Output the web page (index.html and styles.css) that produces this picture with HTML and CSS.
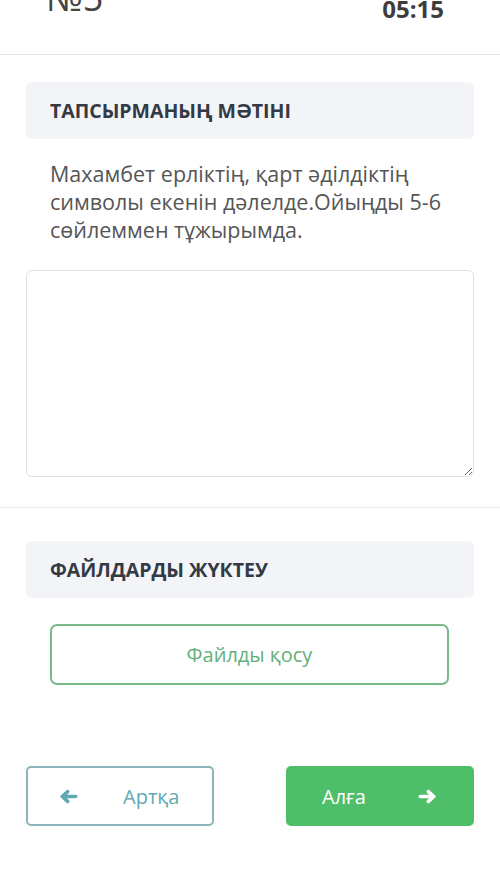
FILE: index.html
```html
<!DOCTYPE html>
<html lang="kk">
<head>
  <meta charset="UTF-8">
  <meta name="viewport" content="width=device-width, initial-scale=1.0">
  <title>Тапсырма №5</title>
  <link rel="stylesheet" href="styles.css">
</head>
<body class="body">
  <!-- Жоғарғы панель: тапсырма нөмірі және таймер -->
  <header class="topbar">
    <span class="topbar-number">№5</span>
    <span class="topbar-timer">05:15</span>
  </header>

  <!-- Тапсырма мәтіні -->
  <section class="section section-task">
    <div class="section-title">ТАПСЫРМАНЫҢ МӘТІНІ</div>
    <p class="task-text">Махамбет ерліктің, қарт әділдіктің символы екенін дәлелде.Ойыңды 5-6 сөйлеммен тұжырымда.</p>
    <textarea class="answer"></textarea>
  </section>

  <!-- Файлдар -->
  <section class="section section-files">
    <div class="section-title">ФАЙЛДАРДЫ ЖҮКТЕУ</div>
    <button class="upload-button">Файлды қосу</button>
  </section>

  <!-- Навигация -->
  <nav class="nav">
    <button class="nav-button nav-back">
      <svg class="nav-icon" viewBox="0 0 20 16" width="18" height="15">
        <path d="M2.5 8 L8.5 2.5 M2.5 8 L8.5 13.5 M3 8 H17.5" fill="none" stroke="currentColor" stroke-width="4" stroke-linecap="round" stroke-linejoin="round"/>
      </svg>
      <span class="nav-label">Артқа</span>
    </button>
    <button class="nav-button nav-next">
      <span class="nav-label">Алға</span>
      <svg class="nav-icon" viewBox="0 0 20 16" width="18" height="15">
        <path d="M17.5 8 L11.5 2.5 M17.5 8 L11.5 13.5 M17 8 H2.5" fill="none" stroke="currentColor" stroke-width="4" stroke-linecap="round" stroke-linejoin="round"/>
      </svg>
    </button>
  </nav>
</body>
</html>
```

FILE: styles.css
```css
.body {
  margin: 0;
  background-color: #ffffff;
  font-family: "Open Sans", "Noto Sans", sans-serif;
  color: #4a4a4a;
}
.topbar {
  height: 54px;
  display: flex;
  justify-content: space-between;
  align-items: flex-start;
  padding: 0 56px 0 46px;
  border-bottom: 1px solid #e6e6e6;
  overflow: hidden;
}
.topbar-number {
  margin-top: -20px;
  font-size: 36px;
  line-height: 36px;
  color: #444444;
}
.topbar-timer {
  margin-top: -3px;
  font-size: 24px;
  line-height: 24px;
  font-weight: 700;
  color: #3d3d3d;
}
.section {
  padding: 27px 26px 30px;
}
.section-task {
  border-bottom: 1px solid #e8e8e8;
}
.section-files {
  padding-top: 33px;
}
.section-title {
  height: 57px;
  display: flex;
  align-items: center;
  padding: 0 24px;
  box-sizing: border-box;
  border-radius: 6px;
  background-color: #f3f4f7;
  font-size: 19.5px;
  font-weight: 700;
  color: #343a44;
}
.task-text {
  margin: 21px 24px 0;
  font-size: 21.5px;
  line-height: 28px;
  color: #555555;
}
.answer {
  display: block;
  margin-top: 26px;
  width: 100%;
  height: 207px;
  box-sizing: border-box;
  border: 1px solid #e0e0e0;
  border-radius: 6px;
  background-color: #ffffff;
  resize: vertical;
}
.upload-button {
  display: block;
  margin: 26px 24px 0;
  width: calc(100% - 49px);
  height: 61px;
  border: 2px solid #79b98a;
  border-radius: 7px;
  background-color: #ffffff;
  font-family: inherit;
  font-size: 20px;
  color: #63b07a;
  cursor: pointer;
}
.nav {
  display: flex;
  justify-content: space-between;
  padding: 51px 26px 0;
}
.nav-button {
  width: 188px;
  height: 60px;
  display: flex;
  align-items: center;
  box-sizing: border-box;
  border-radius: 5px;
  font-family: inherit;
  font-size: 20px;
  cursor: pointer;
}
.nav-back {
  padding: 0 0 0 32px;
  border: 2px solid #8db3ba;
  background-color: #ffffff;
  color: #62a8b4;
}
.nav-back .nav-label {
  margin-left: 45px;
}
.nav-next {
  padding: 0 0 0 36px;
  border: none;
  background-color: #4fbe68;
  color: #ffffff;
}
.nav-next .nav-label {
  margin-right: 52px;
}
.nav-icon {
  display: block;
}
```
